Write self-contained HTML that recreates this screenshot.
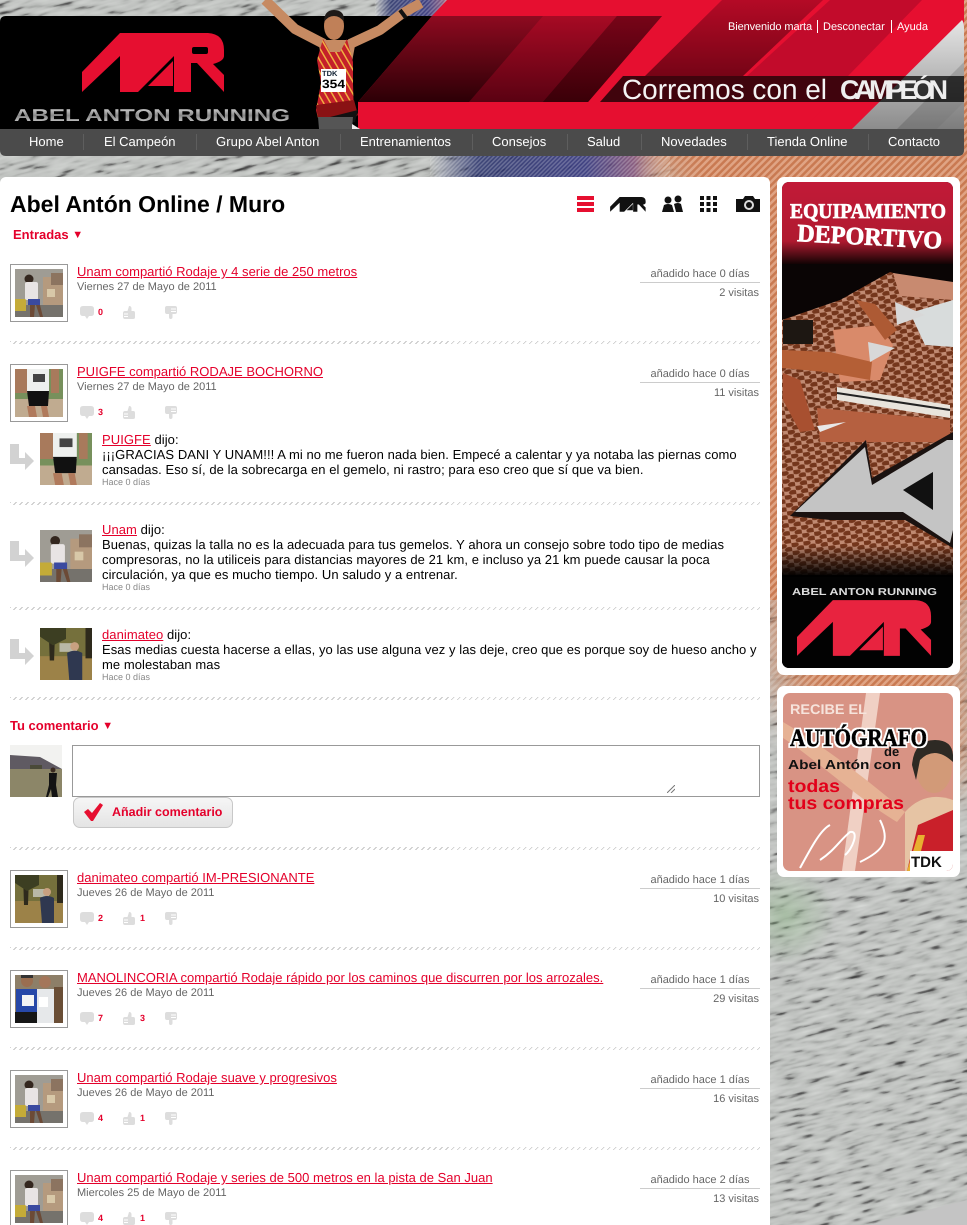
<!DOCTYPE html>
<html lang="es"><head><meta charset="utf-8"><title>Abel Antón Online / Muro</title>
<style>
html,body{margin:0;padding:0;width:967px;height:1225px;overflow:hidden;background:#c4c4c4}
body{font-family:"Liberation Sans",sans-serif;font-size:13px;color:#000;text-rendering:geometricPrecision}
#w{position:relative;width:967px;height:1225px;overflow:hidden}
#w *{box-sizing:border-box}
.a{position:absolute;white-space:nowrap}
svg{display:block;position:absolute}
a{color:#e4002b;text-decoration:underline}
.nav{color:#fff;font-size:13px;top:134px;line-height:15px}
.ns{top:134px;width:1px;height:16px;background:#5e5e5e}
.e{position:absolute;left:0;width:770px;height:70px}
.b{position:absolute;left:10px;top:0;width:58px;height:58px;border:1px solid #999}
.t{position:absolute;left:77px;top:0;line-height:15px;font-size:13px;white-space:nowrap;letter-spacing:.012px}
.d{position:absolute;left:77px;top:16px;font-size:11px;line-height:13px;color:#666;white-space:nowrap;padding-top:1px}
.n{position:absolute;top:43px;font-size:9px;line-height:11px;font-weight:bold;color:#e4002b}
.r1{position:absolute;left:640px;width:120px;top:0;height:19px;border-bottom:1px solid #ccc;text-align:center;font-size:11px;line-height:14px;color:#666;padding-top:3px}
.r2{position:absolute;left:640px;width:119px;top:23px;text-align:right;font-size:11px;line-height:13px;color:#666}
.sep{position:absolute;left:10px;width:750px;height:3px;background:repeating-linear-gradient(135deg,#c6c6c6 0 .9px,transparent .9px 4.24px)}
.c{position:absolute;left:102px;line-height:15px;font-size:13px;white-space:nowrap;letter-spacing:.065px}
.h{position:absolute;left:102px;font-size:9px;line-height:11px;color:#888;white-space:nowrap}
.h1{color:#e4002b;font-weight:bold;font-size:13px;line-height:15px}
.tr{font-size:11px;vertical-align:1px}
</style></head><body><div id="w">

<svg width="967" height="1225" style="left:0;top:0" viewBox="0 0 967 1225">
<defs>
<filter id="tx" x="0" y="0" width="100%" height="100%" color-interpolation-filters="sRGB">
<feTurbulence type="fractalNoise" baseFrequency="0.045 0.22" numOctaves="2" seed="7"/>
<feColorMatrix values="1 0 0 0 0 1 0 0 0 0 1 0 0 0 0 0 0 0 0 1"/>
<feComponentTransfer><feFuncR type="table" tableValues=".22 .22 .36 .66 .74 .77 .79 .81 .85 .88"/><feFuncG type="table" tableValues=".22 .22 .36 .67 .75 .78 .8 .82 .86 .88"/><feFuncB type="table" tableValues=".22 .22 .36 .66 .74 .77 .79 .81 .85 .88"/></feComponentTransfer>
</filter>
<pattern id="txp" x="-500" y="-500" width="2100" height="2300" patternUnits="userSpaceOnUse" patternTransform="rotate(-14 480 600)"><rect x="-500" y="-500" width="2100" height="2300" filter="url(#tx)"/></pattern>
<filter id="bz" x="-20%" y="-20%" width="140%" height="140%"><feGaussianBlur stdDeviation="22"/></filter>
<pattern id="st" width="5" height="5" patternUnits="userSpaceOnUse" patternTransform="rotate(45)"><rect width="5" height="5" fill="#e0a484"/><rect width="2.500" height="5" fill="#c97a52"/></pattern>
<mask id="om" maskUnits="userSpaceOnUse" x="0" y="0" width="967" height="1225"><rect width="967" height="1225" fill="#000"/><polygon points="450,0 967,0 967,790 920,770 780,700 740,300 650,160" fill="#fff" filter="url(#bz)"/><rect x="700" y="0" width="267" height="600" fill="#fff"/></mask>
<linearGradient id="bl" x1="0" x2="1" y1="0" y2="0"><stop offset="0" stop-color="#27306a" stop-opacity="0"/><stop offset=".2" stop-color="#27306a" stop-opacity=".85"/><stop offset=".65" stop-color="#33357c" stop-opacity=".9"/><stop offset=".85" stop-color="#7c4a78" stop-opacity=".8"/><stop offset="1" stop-color="#c97a52" stop-opacity="0"/></linearGradient>
<radialGradient id="gr"><stop offset="0" stop-color="#7fb077" stop-opacity=".4"/><stop offset="1" stop-color="#7fb077" stop-opacity="0"/></radialGradient>
<pattern id="hh" width="3" height="3" patternUnits="userSpaceOnUse" patternTransform="rotate(45)"><rect width="1.500" height="3" fill="#fff" opacity=".22"/></pattern>
</defs>
<rect width="967" height="1225" fill="url(#txp)"/>
<rect width="967" height="1225" fill="url(#st)" mask="url(#om)"/>
<rect x="430" y="156" width="240" height="21" fill="url(#bl)"/>
<rect x="430" y="156" width="240" height="21" fill="url(#hh)"/>
<rect x="375" y="0" width="80" height="16" fill="url(#bl)"/>
<rect x="375" y="0" width="80" height="16" fill="url(#hh)"/>
<ellipse cx="785" cy="915" rx="50" ry="50" fill="url(#gr)"/>
</svg>

<!-- header -->
<svg width="967" height="157" style="left:0;top:0" viewBox="0 0 967 157">
<defs>
<linearGradient id="g1" x1="0" x2="0" y1="0" y2="1"><stop offset="0" stop-color="#8e0a20"/><stop offset="1" stop-color="#2c0006"/></linearGradient>
<linearGradient id="g2" x1="0" x2="0" y1="0" y2="1"><stop offset="0" stop-color="#b40a26"/><stop offset="1" stop-color="#760416"/></linearGradient>
<linearGradient id="g3" x1="0" x2="0" y1="0" y2="1"><stop offset="0" stop-color="#e6e6e6"/><stop offset="1" stop-color="#8c8c8c"/></linearGradient>
<linearGradient id="g4" x1="0" x2="0" y1="0" y2="1"><stop offset="0" stop-color="#a70a24"/><stop offset="1" stop-color="#5a0212"/></linearGradient>
<linearGradient id="g6" x1="0" x2="0" y1="0" y2="1"><stop offset="0" stop-color="#780418"/><stop offset="1" stop-color="#3a0008"/></linearGradient>
<linearGradient id="g5" x1="0" x2="0" y1="0" y2="1"><stop offset="0" stop-color="#e8e8e8"/><stop offset=".5" stop-color="#888"/><stop offset="1" stop-color="#ddd"/></linearGradient>
<pattern id="jer" width="6" height="6" patternUnits="userSpaceOnUse" patternTransform="rotate(-30)"><rect width="6" height="6" fill="#c4202a"/><rect width="1.500" height="6" fill="#f0b040"/></pattern>
<symbol id="mar" viewBox="82 33 143 60"><path d="M82 72 120 33H208Q224 34 224 50V56Q224 61 213 64L224 75V92L197 63H191V92H174V56L138 92H120V56L82 92Z"/><path d="M148 86 173 61V86Z"/></symbol>
</defs>
<path d="M6 16H440V129H0V22Q0 16 6 16Z" fill="#000"/>
<polygon points="447,0 964,0 964,129 358,129 358,102 432,16" fill="#e60f30"/>
<polygon points="432,16 662,16 588,102 358,102" fill="url(#g1)"/>
<polygon points="543,16 617,16 543,102 469,102" fill="url(#g4)"/>
<polygon points="617,16 662,16 588,102 543,102" fill="url(#g6)"/>
<polygon points="722,0 823,0 743,76 645,76" fill="url(#g2)"/>
<polygon points="830,0 922,0 848,76 747,76" fill="#c20b2b"/>
<path d="M962 20Q964 22 964 27V129H852Z" fill="url(#g3)"/>
<polygon points="964,62 964,102 937,129 897,129" fill="#000" opacity=".14"/>
<polygon points="964,102 964,129 937,129" fill="#000" opacity=".1"/>
<polygon points="623,76 964,76 964,102 600,102" fill="#000" opacity=".72"/>
<polygon points="600,102 830,102 803,129 600,129" fill="#e60f30"/>
<text x="622" y="99" font-size="28" textLength="205" lengthAdjust="spacingAndGlyphs" font-family="Liberation Sans" fill="#f4f4f4">Corremos con el</text>
<text x="840" y="99" font-size="27" font-weight="bold" textLength="108" lengthAdjust="spacing" font-family="Liberation Sans" fill="#eee">CAMPEÓN</text>
<use href="#mar" x="82" y="33" width="143" height="60" fill="#e60f30"/>
<rect x="192" y="47" width="16" height="7" rx="2" fill="#000"/>
<text x="14" y="121" font-size="17" font-weight="bold" fill="url(#g5)" textLength="276" lengthAdjust="spacingAndGlyphs" font-family="Liberation Sans">ABEL ANTON RUNNING</text>
<!-- runner -->
<g>
<path d="M265 0 295 29 324 44" fill="none" stroke="#c68a62" stroke-width="10" stroke-linejoin="round"/>
<path d="M421 3 403 13 380 30 350 44" fill="none" stroke="#c68a62" stroke-width="10" stroke-linejoin="round"/>
<path d="M400 10 406 18" stroke="#111" stroke-width="4"/>
<path d="M318 40 356 40 352 62 322 62Z" fill="#c68a62"/>
<ellipse cx="334" cy="26" rx="10" ry="14" fill="#c08058"/>
<path d="M324 22Q324 10 334 10 345 10 344 22 340 16 334 16 328 16 324 22Z" fill="#1f1a18"/>
<path d="M323 39 317 60 321 83 316 110 318 118 354 116 353 84 353 62 347 39 340 52 330 52Z" fill="url(#jer)"/>
<path d="M316 105 354 100 358 115 352 120 318 118Z" fill="#8a1214"/>
<path d="M330 117 358 110 355 122 340 125Z" fill="#111"/>
<path d="M318 117H353L352 129H319Z" fill="#555"/>
<path d="M352 124 360 129H352Z" fill="#eee"/>
<rect x="321" y="69" width="25" height="23" fill="#fff"/>
<text x="322" y="76" font-size="7.500" font-weight="bold" fill="#123" font-family="Liberation Sans">TDK</text>
<text x="322" y="88" font-size="12" font-weight="bold" fill="#000" textLength="23" lengthAdjust="spacingAndGlyphs" font-family="Liberation Sans">354</text>
</g>
<path d="M0 129H964V150Q964 156 958 156H6Q0 156 0 150Z" fill="#4b4b4b"/>
</svg>

<span class="a" style="left:728px;top:20px;font-size:11px;line-height:13px;color:#fff;padding-top:1px;letter-spacing:-.1px">Bienvenido marta</span>
<span class="a" style="left:817px;top:20px;width:1px;height:13px;background:#fff"></span>
<span class="a" style="left:823px;top:20px;font-size:11px;line-height:13px;color:#fff;padding-top:1px">Desconectar</span>
<span class="a" style="left:891px;top:20px;width:1px;height:13px;background:#fff"></span>
<span class="a" style="left:897px;top:20px;font-size:11px;line-height:13px;color:#fff;padding-top:1px">Ayuda</span>

<span class="a nav" style="left:29px">Home</span><span class="a ns" style="left:83px"></span>
<span class="a nav" style="left:104px">El Campeón</span><span class="a ns" style="left:196px"></span>
<span class="a nav" style="left:216px;letter-spacing:.1px">Grupo Abel Anton</span><span class="a ns" style="left:340px"></span>
<span class="a nav" style="left:360px">Entrenamientos</span><span class="a ns" style="left:472px"></span>
<span class="a nav" style="left:492px">Consejos</span><span class="a ns" style="left:567px"></span>
<span class="a nav" style="left:587px">Salud</span><span class="a ns" style="left:641px"></span>
<span class="a nav" style="left:661px">Novedades</span><span class="a ns" style="left:747px"></span>
<span class="a nav" style="left:767px">Tienda Online</span><span class="a ns" style="left:868px"></span>
<span class="a nav" style="left:888px">Contacto</span>

<!-- main panel -->
<div class="a" style="left:0;top:177px;width:770px;height:1048px;background:#fff;border-radius:6px 6px 0 0"></div>

<svg width="0" height="0" style="left:0;top:0">
<defs>
<symbol id="cb" viewBox="0 0 14 13"><path d="M3 0H11Q14 0 14 3V7Q14 10 11 10H9L7 13 5 10H3Q0 10 0 7V3Q0 0 3 0Z" fill="#ddd"/></symbol>
<symbol id="tu" viewBox="0 0 12 13"><path d="M6 0Q8.500 0 8.500 2.500V5H10.500Q12 5 12 7V11.500Q12 13 10 13H2Q0 13 0 11V7Q0 5 2 5H4.500Z" fill="#ddd"/><path d="M1 8H5M1 10.500H5" stroke="#fff"/></symbol>
<symbol id="td" viewBox="0 0 12 13"><path d="M2 0H10Q12 0 12 2V6Q12 8 10 8H7.500V11Q7.500 13 5.500 13 4 13 4 11V8H2Q0 8 0 6V2Q0 0 2 0Z" fill="#ddd"/><path d="M6 3H11M6 5.500H11" stroke="#fff"/></symbol>
<symbol id="ph1" viewBox="0 0 48 48"><rect width="48" height="48" fill="#9f9c94"/><rect x="28" y="8" width="20" height="30" fill="#b59a7e"/><rect x="36" y="4" width="12" height="12" fill="#8c7460"/><rect x="32" y="20" width="8" height="8" fill="#d8c8a8"/><rect y="36" width="48" height="12" fill="#75726c"/><rect y="30" width="11" height="12" fill="#c4ab38"/><circle cx="14" cy="10" r="4.500" fill="#33261e"/><rect x="10" y="13" width="13" height="18" rx="2" fill="#e8e4e4"/><rect x="13" y="30" width="12" height="6" fill="#3a4aa0"/><path d="M15 36 15 48H19L20 36ZM21 36 25 48H28L25 36Z" fill="#6c4a36"/></symbol>
<symbol id="ph2" viewBox="0 0 48 48"><rect width="48" height="48" fill="#77905c"/><rect y="30" width="48" height="18" fill="#c0ab90"/><path d="M0 0H12V24H0Z" fill="#a87a5c"/><path d="M36 0H44V24H36Z" fill="#a87a5c"/><rect x="12" y="0" width="22" height="24" fill="#eef0ee"/><rect x="18" y="5" width="12" height="8" fill="#444"/><path d="M12 22H34L33 37H14Z" fill="#111"/><path d="M12 37H20L22 48H14ZM26 37H32L34 48H28Z" fill="#b07a5c"/></symbol>
<symbol id="ph3" viewBox="0 0 48 48"><rect width="48" height="48" fill="#75703c"/><rect y="26" width="48" height="22" fill="#9c8248"/><path d="M8 0H14L13 30H9Z" fill="#2e2a1c"/><path d="M0 0H24V10L12 16 0 8Z" fill="#3c3e22"/><rect x="42" y="0" width="6" height="28" fill="#2e2a1c"/><rect x="18" y="14" width="16" height="8" fill="#b9b8a6"/><circle cx="32" cy="17" r="4" fill="#c8a080"/><path d="M25 23Q32 19 39 23V48H27Z" fill="#2f3850"/></symbol>
<symbol id="ph4" viewBox="0 0 48 48"><rect width="48" height="48" fill="#8d7f68"/><circle cx="12" cy="6" r="6" fill="#9a6e50"/><circle cx="30" cy="7" r="6" fill="#a4765a"/><rect x="6" y="0" width="12" height="3" fill="#333"/><rect x="1" y="14" width="21" height="24" fill="#2748a8"/><rect x="7" y="20" width="12" height="11" fill="#f4f4f4"/><rect x="22" y="14" width="17" height="34" fill="#e6e8ea"/><rect x="24" y="22" width="9" height="10" fill="#fff"/><rect y="37" width="22" height="11" fill="#161616"/><rect x="39" y="12" width="9" height="36" fill="#6a4e36"/></symbol>
<symbol id="ph5" viewBox="0 0 52 52"><rect width="52" height="52" fill="#f2f2f0"/><path d="M0 10 30 12 52 24V30H0Z" fill="#5f5a62"/><rect y="24" width="52" height="28" fill="#8c8668"/><rect x="20" y="20" width="12" height="4" fill="#4a4a38"/><circle cx="43" cy="25" r="2.500" fill="#3a2a20"/><path d="M39 28H47L46 40 48 52H42L41 44 38 52H36L39 40Z" fill="#131313"/></symbol>
<symbol id="ar" viewBox="0 0 24 26"><path d="M0 0H9V14H15V8L24 17 15 26V20H0Z" fill="#d2d2d2"/></symbol>
</defs>
</svg>

<div class="a" style="left:10px;top:190px;font-size:23px;font-weight:bold;line-height:28px">Abel Antón Online / Muro</div>
<div class="a h1" style="left:13px;top:227px">Entradas <span class="tr">▼</span></div>

<!-- view icons -->
<svg width="190" height="20" style="left:575px;top:194px" viewBox="575 194 190 20">
<g fill="#e60f30"><rect x="577" y="196" width="17" height="4"/><rect x="577" y="202" width="17" height="4"/><rect x="577" y="208" width="17" height="4"/></g>
<use href="#mar" x="610" y="197" width="36" height="15" fill="#111"/>
<g fill="#111"><circle cx="668" cy="200" r="3.500"/><path d="M662 212 664 205Q668 203 672 205L674 212Z"/><circle cx="678" cy="199" r="3.500"/><path d="M674 204Q678 202 681 204L683 212H676Z"/></g>
<g fill="#111"><rect x="700" y="196" width="4" height="4"/><rect x="706.500" y="196" width="4" height="4"/><rect x="713" y="196" width="4" height="4"/><rect x="700" y="202" width="4" height="4"/><rect x="706.500" y="202" width="4" height="4"/><rect x="713" y="202" width="4" height="4"/><rect x="700" y="208" width="4" height="4"/><rect x="706.500" y="208" width="4" height="4"/><rect x="713" y="208" width="4" height="4"/></g>
<path d="M736 199H743L745 196H753L755 199H760V212H736Z" fill="#111"/><circle cx="749" cy="205" r="5" fill="#ddd"/><circle cx="749" cy="205" r="3" fill="#111"/>
</svg>

<!-- entry 1 -->
<div class="e" style="top:264px"><div class="b"></div><svg width="48" height="48" style="left:15px;top:5px"><use href="#ph1"/></svg>
<div class="t"><a>Unam compartió Rodaje y 4 serie de 250 metros</a></div><div class="d">Viernes 27 de Mayo de 2011</div>
<svg width="14" height="13" style="left:80px;top:42px"><use href="#cb"/></svg><span class="n" style="left:98px">0</span>
<svg width="12" height="13" style="left:123px;top:42px"><use href="#tu"/></svg><svg width="12" height="13" style="left:165px;top:42px"><use href="#td"/></svg>
<div class="r1">añadido hace 0 días</div><div class="r2">2 visitas</div></div>
<div class="sep" style="top:341px"></div>

<!-- entry 2 -->
<div class="e" style="top:364px"><div class="b"></div><svg width="48" height="48" style="left:15px;top:5px"><use href="#ph2"/></svg>
<div class="t"><a>PUIGFE compartió RODAJE BOCHORNO</a></div><div class="d">Viernes 27 de Mayo de 2011</div>
<svg width="14" height="13" style="left:80px;top:42px"><use href="#cb"/></svg><span class="n" style="left:98px">3</span>
<svg width="12" height="13" style="left:123px;top:42px"><use href="#tu"/></svg><svg width="12" height="13" style="left:165px;top:42px"><use href="#td"/></svg>
<div class="r1">añadido hace 0 días</div><div class="r2">11 visitas</div></div>

<!-- comments -->
<svg width="24" height="26" style="left:10px;top:444px"><use href="#ar"/></svg>
<svg width="52" height="52" style="left:40px;top:433px" viewBox="0 0 48 48"><use href="#ph2" width="48" height="48"/></svg>
<div class="c" style="top:432px"><a>PUIGFE</a> dijo:<br>¡¡¡GRACIAS DANI Y UNAM!!! A mi no me fueron nada bien. Empecé a calentar y ya notaba las piernas como<br>cansadas. Eso sí, de la sobrecarga en el gemelo, ni rastro; para eso creo que sí que va bien.</div>
<div class="h" style="top:477px">Hace 0 días</div>
<div class="sep" style="top:502px"></div>

<svg width="24" height="26" style="left:10px;top:541px"><use href="#ar"/></svg>
<svg width="52" height="52" style="left:40px;top:530px" viewBox="0 0 48 48"><use href="#ph1" width="48" height="48"/></svg>
<div class="c" style="top:522px"><a>Unam</a> dijo:<br>Buenas, quizas la talla no es la adecuada para tus gemelos. Y ahora un consejo sobre todo tipo de medias<br>compresoras, no la utiliceis para distancias mayores de 21 km, e incluso ya 21 km puede causar la poca<br>circulación, ya que es mucho tiempo. Un saludo y a entrenar.</div>
<div class="h" style="top:582px">Hace 0 días</div>
<div class="sep" style="top:607px"></div>

<svg width="24" height="26" style="left:10px;top:639px"><use href="#ar"/></svg>
<svg width="52" height="52" style="left:40px;top:628px" viewBox="0 0 48 48"><use href="#ph3" width="48" height="48"/></svg>
<div class="c" style="top:627px"><a>danimateo</a> dijo:<br>Esas medias cuesta hacerse a ellas, yo las use alguna vez y las deje, creo que es porque soy de hueso ancho y<br>me molestaban mas</div>
<div class="h" style="top:672px">Hace 0 días</div>
<div class="sep" style="top:697px"></div>

<!-- comment form -->
<div class="a h1" style="left:10px;top:718px">Tu comentario <span class="tr">▼</span></div>
<svg width="52" height="52" style="left:10px;top:745px"><use href="#ph5"/></svg>
<div class="a" style="left:72px;top:745px;width:688px;height:52px;border:1px solid #999;background:#fff"></div>
<svg width="8" height="8" style="left:667px;top:785px"><path d="M0 8 8 0M4 8 8 4" stroke="#777" fill="none"/></svg>
<div class="a" style="left:73px;top:797px;width:160px;height:31px;border:1px solid #c8c8c8;border-radius:7px;background:linear-gradient(#f6f6f6,#e4e4e4)"></div>
<svg width="20" height="18" style="left:83px;top:803px"><path d="M1 9 5 6 9 10 17 0 20 2 10 18 8 18Z" fill="#e60f30"/></svg>
<div class="a" style="left:112px;top:805px;font-size:12.500px;font-weight:bold;line-height:15px;color:#e4002b">Añadir comentario</div>
<div class="sep" style="top:847px"></div>

<!-- entry 3 -->
<div class="e" style="top:870px"><div class="b"></div><svg width="48" height="48" style="left:15px;top:5px"><use href="#ph3"/></svg>
<div class="t"><a>danimateo compartió IM-PRESIONANTE</a></div><div class="d">Jueves 26 de Mayo de 2011</div>
<svg width="14" height="13" style="left:80px;top:42px"><use href="#cb"/></svg><span class="n" style="left:98px">2</span>
<svg width="12" height="13" style="left:123px;top:42px"><use href="#tu"/></svg><span class="n" style="left:140px">1</span><svg width="12" height="13" style="left:165px;top:42px"><use href="#td"/></svg>
<div class="r1">añadido hace 1 días</div><div class="r2">10 visitas</div></div>
<div class="sep" style="top:947px"></div>

<!-- entry 4 -->
<div class="e" style="top:970px"><div class="b"></div><svg width="48" height="48" style="left:15px;top:5px"><use href="#ph4"/></svg>
<div class="t"><a>MANOLINCORIA compartió Rodaje rápido por los caminos que discurren por los arrozales.</a></div><div class="d">Jueves 26 de Mayo de 2011</div>
<svg width="14" height="13" style="left:80px;top:42px"><use href="#cb"/></svg><span class="n" style="left:98px">7</span>
<svg width="12" height="13" style="left:123px;top:42px"><use href="#tu"/></svg><span class="n" style="left:140px">3</span><svg width="12" height="13" style="left:165px;top:42px"><use href="#td"/></svg>
<div class="r1">añadido hace 1 días</div><div class="r2">29 visitas</div></div>
<div class="sep" style="top:1047px"></div>

<!-- entry 5 -->
<div class="e" style="top:1070px"><div class="b"></div><svg width="48" height="48" style="left:15px;top:5px"><use href="#ph1"/></svg>
<div class="t"><a>Unam compartió Rodaje suave y progresivos</a></div><div class="d">Jueves 26 de Mayo de 2011</div>
<svg width="14" height="13" style="left:80px;top:42px"><use href="#cb"/></svg><span class="n" style="left:98px">4</span>
<svg width="12" height="13" style="left:123px;top:42px"><use href="#tu"/></svg><span class="n" style="left:140px">1</span><svg width="12" height="13" style="left:165px;top:42px"><use href="#td"/></svg>
<div class="r1">añadido hace 1 días</div><div class="r2">16 visitas</div></div>
<div class="sep" style="top:1147px"></div>

<!-- entry 6 -->
<div class="e" style="top:1170px;height:55px;overflow:hidden"><div class="b"></div><svg width="48" height="48" style="left:15px;top:5px"><use href="#ph1"/></svg>
<div class="t"><a>Unam compartió Rodaje y series de 500 metros en la pista de San Juan</a></div><div class="d">Miercoles 25 de Mayo de 2011</div>
<svg width="14" height="13" style="left:80px;top:42px"><use href="#cb"/></svg><span class="n" style="left:98px">4</span>
<svg width="12" height="13" style="left:123px;top:42px"><use href="#tu"/></svg><span class="n" style="left:140px">1</span><svg width="12" height="13" style="left:165px;top:42px"><use href="#td"/></svg>
<div class="r1">añadido hace 2 días</div><div class="r2">13 visitas</div></div>

<!-- sidebar -->
<div class="a" style="left:777px;top:177px;width:183px;height:498px;background:#fff;border-radius:7px"></div>
<div class="a" style="left:777px;top:686px;width:183px;height:191px;background:#fff;border-radius:7px"></div>

<svg width="171" height="486" style="left:782px;top:182px;border-radius:7px" viewBox="782 182 171 486">
<defs>
<pattern id="sc" width="12" height="8" patternUnits="userSpaceOnUse" patternTransform="rotate(-8)"><rect width="12" height="8" fill="#c08a72"/><ellipse cx="3" cy="2" rx="4.300" ry="2.500" fill="#74361c"/><ellipse cx="9" cy="6" rx="4.300" ry="2.500" fill="#74361c"/></pattern>
<linearGradient id="rt" x1="0" x2="0" y1="0" y2="1"><stop offset="0" stop-color="#c21a38"/><stop offset=".72" stop-color="#b01a30"/><stop offset="1" stop-color="#120404"/></linearGradient>
<linearGradient id="bt" x1="0" x2="0" y1="0" y2="1"><stop offset="0" stop-color="#000" stop-opacity="0"/><stop offset="1" stop-color="#000"/></linearGradient>
</defs>
<rect x="782" y="182" width="171" height="486" fill="#0a0505"/>
<rect x="782" y="182" width="171" height="82" fill="url(#rt)"/>
<!-- upper shoe -->
<path d="M782 320 840 300 890 272 953 290V575H782Z" fill="url(#sc)"/>
<rect x="783" y="320" width="30" height="24" fill="#1d1712"/>
<path d="M893 273 953 282V300L900 296Z" fill="#c88a70"/>
<path d="M833 330 880 325 893 345 880 380 840 382Z" fill="#d98a6a"/>
<path d="M856 300 875 304 897 330 885 340Z" fill="#ad5a34"/>
<path d="M782 350 830 352 872 362 870 380 825 372 782 368Z" fill="#b45f36"/>
<path d="M783 373 800 380 815 430 800 432 783 400Z" fill="#a85030"/>
<path d="M910 313 953 300V347L925 345Z" fill="#d8dcdc"/>
<polygon points="895,302 925,315 897,325" fill="#d8d8d8"/>
<polygon points="868,342 895,348 870,362" fill="#d8d8d8"/>
<path d="M837 387 950 405V418L837 400Z" fill="#e8e4dc"/>
<path d="M837 393 950 410" stroke="#222" stroke-width="2"/>
<path d="M817 408 950 420V442L820 442Z" fill="#b56040"/>
<polygon points="817,426 846,422 820,432" fill="#e8e8e8"/>
<!-- silver arrow -->
<path d="M790 516 866 440 872 478 953 432V548L905 520 830 520Z" fill="#1a1210"/>
<path d="M795 512 865 447 872 485 947 440 953 440V530L950 543 903 512Z" fill="#c4c4c4"/>
<polygon points="903,490 933,472 933,510" fill="#111"/>
<rect x="782" y="545" width="171" height="32" fill="url(#bt)"/>
<rect x="782" y="577" width="171" height="91" fill="#020202"/>
<text x="790" y="218" font-family="Liberation Serif" font-weight="bold" font-size="21" fill="#fff" stroke="#fff" stroke-width=".7" textLength="156" lengthAdjust="spacingAndGlyphs">EQUIPAMIENTO</text>
<text x="797" y="245" font-family="Liberation Serif" font-weight="bold" font-size="25" fill="#fff" stroke="#fff" stroke-width=".7" textLength="145" lengthAdjust="spacingAndGlyphs" transform="rotate(3 870 240)">DEPORTIVO</text>
<text x="792" y="595" font-family="Liberation Sans" font-weight="bold" font-size="10" fill="#ddd" textLength="145" lengthAdjust="spacingAndGlyphs">ABEL ANTON RUNNING</text>
<use href="#mar" x="797" y="600" width="135" height="57" fill="#e8233f"/>
</svg>

<svg width="170" height="178" style="left:783px;top:693px;border-radius:7px" viewBox="783 693 170 178">
<defs><filter id="hl" x="-5%" y="-20%" width="110%" height="140%"><feMorphology in="SourceAlpha" operator="dilate" radius="1.500" result="m"/><feFlood flood-color="#fff"/><feComposite in2="m" operator="in" result="h"/><feMerge><feMergeNode in="h"/><feMergeNode in="SourceGraphic"/></feMerge></filter></defs>
<rect x="783" y="693" width="170" height="178" fill="#d89384"/>
<path d="M866 693H880L855 871H842Z" fill="#f0d0c4"/>
<path d="M783 722C830 750 880 790 905 812L897 822C860 800 810 755 783 738Z" fill="#e6b294"/>
<path d="M905 812Q925 790 953 800V871H905Z" fill="#e6c4a4"/>
<path d="M907 871 918 825 953 810V871Z" fill="#c9202a"/>
<path d="M907 871 918 835 925 835 916 871Z" fill="#e8b030"/>
<rect x="910" y="851" width="43" height="20" fill="#fff"/>
<ellipse cx="934" cy="768" rx="18" ry="25" fill="#d29a78"/>
<path d="M912 765Q914 740 935 740 952 740 953 755V762Q935 745 920 760L916 780Z" fill="#2e2a24"/>
<path d="M800 868C810 850 820 830 830 825M820 860C835 850 840 840 850 832 860 830 852 850 845 855M880 820C890 840 885 850 860 862" fill="none" stroke="#fff" stroke-width="2"/>
<text x="790" y="714" font-family="Liberation Sans" font-weight="bold" font-size="14" fill="#f6e4dc" textLength="77" lengthAdjust="spacingAndGlyphs">RECIBE EL</text>
<text x="790" y="746" font-family="Liberation Serif" font-weight="bold" font-size="25" fill="#000" stroke="#000" stroke-width=".8" filter="url(#hl)" textLength="137" lengthAdjust="spacingAndGlyphs">AUTÓGRAFO</text>
<text x="884" y="756" font-family="Liberation Sans" font-weight="bold" font-size="13" fill="#111">de</text>
<text x="788" y="769" font-family="Liberation Sans" font-weight="bold" font-size="13" fill="#111" textLength="113" lengthAdjust="spacingAndGlyphs">Abel Antón con</text>
<text x="788" y="792" font-family="Liberation Sans" font-weight="bold" font-size="18" fill="#e2001a" textLength="52" lengthAdjust="spacingAndGlyphs">todas</text>
<text x="788" y="809" font-family="Liberation Sans" font-weight="bold" font-size="18" fill="#e2001a" textLength="116" lengthAdjust="spacingAndGlyphs">tus compras</text>
<text x="911" y="867" font-family="Liberation Sans" font-weight="bold" font-size="15" fill="#111">TDK</text>
</svg>
</div></body></html>
